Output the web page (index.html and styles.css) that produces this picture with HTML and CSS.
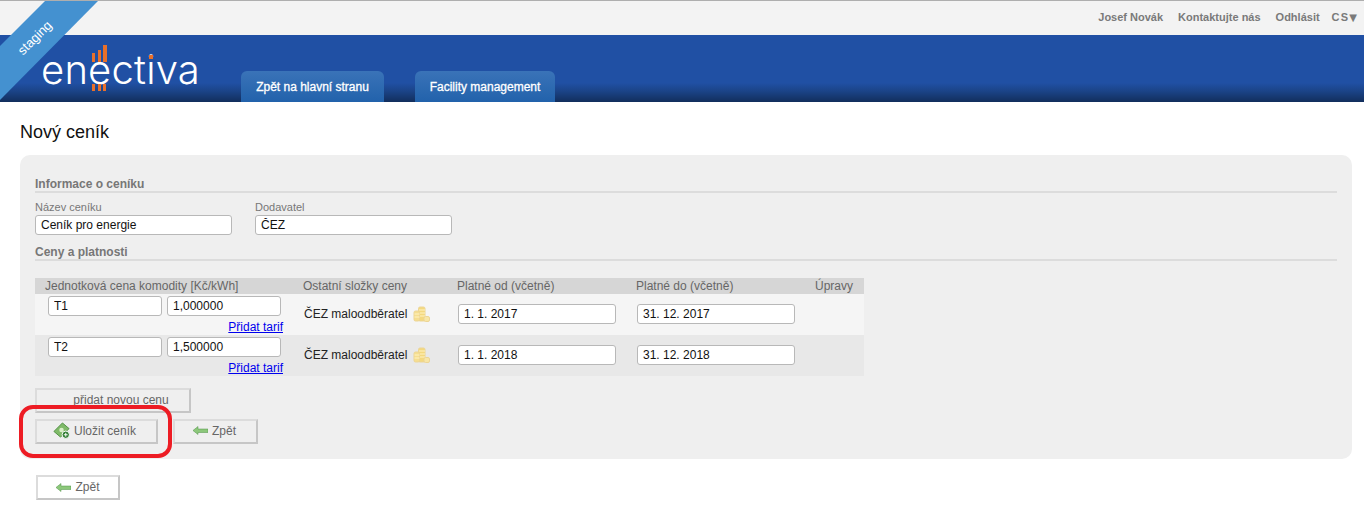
FILE: index.html
```html
<!DOCTYPE html>
<html lang="cs">
<head>
<meta charset="utf-8">
<title>Nový ceník</title>
<link rel="stylesheet" href="styles.css">
</head>
<body>
<svg class="ribbon" width="100" height="102" viewBox="0 0 100 102"><polygon points="45,1 98,1 0,100 0,46" fill="#4491d0"/></svg>
<span class="ribbon-text">staging</span>
<header>
  <nav class="topbar">
    <a>Josef Novák</a><a>Kontaktujte nás</a><a>Odhlásit</a><a class="lang">CS<span class="caret">▼</span></a>
  </nav>
  <div class="mainbar">
    <div class="logo">
      <span class="logo-text">enectiva</span>
      <svg class="logo-marks" width="70" height="48" viewBox="0 0 70 48"><g fill="#e8702a"><rect x="3" y="8" width="3" height="9"/><rect x="9" y="5" width="3" height="12"/><rect x="14" y="0" width="4" height="17"/><rect x="3" y="39" width="3" height="7"/><rect x="9" y="39" width="3" height="7"/><rect x="14" y="39" width="3" height="7"/><rect x="60" y="10" width="4" height="4"/></g></svg>
    </div>
    <a class="tab tab-home">Zpět na hlavní stranu</a>
    <a class="tab">Facility management</a>
  </div>
</header>
<main>
  <h1>Nový ceník</h1>
  <section class="panel">
    <h2>Informace o ceníku</h2>
    <div class="fields">
      <label class="field">Název ceníku<input class="input wide" value="Ceník pro energie"></label>
      <label class="field">Dodavatel<input class="input wide" value="ČEZ"></label>
    </div>
    <h2 class="second">Ceny a platnosti</h2>
    <table class="prices">
      <thead>
        <tr><th class="c1">Jednotková cena komodity [Kč/kWh]</th><th class="c2">Ostatní složky ceny</th><th class="c3">Platné od (včetně)</th><th class="c4">Platné do (včetně)</th><th class="c5">Úpravy</th></tr>
      </thead>
      <tbody>
        <tr class="light">
          <td class="tariff"><div class="pair"><input class="input small" value="T1"><input class="input small" value="1,000000"></div><a class="add" href="#">Přidat tarif</a></td>
          <td class="mid"><div class="other">ČEZ maloodběratel<svg class="coins" width="17" height="17" viewBox="0 0 17 17"><use href="#coin"/></svg></div></td>
          <td class="mid"><input class="input date" value="1. 1. 2017"></td>
          <td class="mid"><input class="input date date-to" value="31. 12. 2017"></td>
          <td></td>
        </tr>
        <tr class="dark">
          <td class="tariff"><div class="pair"><input class="input small" value="T2"><input class="input small" value="1,500000"></div><a class="add" href="#">Přidat tarif</a></td>
          <td class="mid"><div class="other">ČEZ maloodběratel<svg class="coins" width="17" height="17" viewBox="0 0 17 17"><use href="#coin"/></svg></div></td>
          <td class="mid"><input class="input date" value="1. 1. 2018"></td>
          <td class="mid"><input class="input date date-to" value="31. 12. 2018"></td>
          <td></td>
        </tr>
      </tbody>
    </table>
    <button class="btn btn-new">přidat novou cenu</button>
    <div class="actions">
      <button class="btn btn-save"><svg width="17" height="17" viewBox="0 0 18 18"><polygon points="1,10 10,1 17,7 8,16" fill="#7fba68" stroke="#4f8f42"/><circle cx="9" cy="8.500" r="2.400" fill="#d8efc8"/><circle cx="13.500" cy="13.500" r="3.900" fill="#2f7d32" stroke="#fff"/><path d="M13.500 11.500v4M11.500 13.500h4" stroke="#fff"/></svg>Uložit ceník</button>
      <button class="btn btn-back"><svg class="arrow" width="15" height="9" viewBox="0 0 15 9"><use href="#arrow"/></svg>Zpět</button>
    </div>
    <div class="highlight"></div>
  </section>
  <button class="btn btn-back btn-bottom"><svg class="arrow" width="15" height="9" viewBox="0 0 15 9"><use href="#arrow"/></svg>Zpět</button>
</main>
<svg class="defs" width="0" height="0">
  <defs>
    <g id="coin">
      <rect x="5.500" y="1" width="6.500" height="14" rx="1.500" fill="#f4d97f" stroke="#ecd595"/>
      <path d="M6 4h6M6 7h6M6 10h6" stroke="#fff2c2"/>
      <rect x="1" y="5" width="5.500" height="10" rx="1.500" fill="#f6de90" stroke="#ecd595"/>
      <path d="M1.500 8h5M1.500 11h5" stroke="#fff2c2"/>
      <rect x="11" y="10.500" width="5.500" height="5" rx="1.500" fill="#f8e6a6" stroke="#ecd595"/>
    </g>
    <g id="arrow">
      <polygon points="0,4.500 5,0.500 5,3 15,3 15,6.500 5,6.500 5,8.500" fill="#8cc77a" stroke="#4f9146" stroke-width="0.500"/>
    </g>
  </defs>
</svg>
</body>
</html>
```
FILE: styles.css
```css
* { box-sizing: border-box; }
html, body { margin: 0; padding: 0; }
body {
  position: relative;
  background: #fff;
  font-family: "Liberation Sans", Arial, sans-serif;
  font-size: 12px;
  color: #222;
}
.ribbon { position: absolute; left: 0; top: 0; z-index: 2; }
.ribbon-text {
  position: absolute; left: 12px; top: 31px; z-index: 3;
  width: 46px; text-align: center;
  color: #fff; font-size: 13px; line-height: 14px;
  transform: rotate(-45deg);
}
.topbar {
  height: 35px;
  background: #f3f3f3;
  border-top: 1px solid #aeaeae;
  display: flex;
  justify-content: flex-end;
  align-items: center;
  gap: 15px;
  padding: 0 7px 2px 0;
  color: #7a7a7a;
  font-size: 11px;
  font-weight: bold;
}
.topbar .lang { margin-left: -3px; letter-spacing: 1.2px; font-weight: bold; }
.caret { font-family: "DejaVu Sans", sans-serif; font-size: 10px; letter-spacing: 0; }
.mainbar {
  height: 67px;
  display: flex;
  align-items: flex-end;
  padding-left: 43px;
  background: linear-gradient(to bottom, #2050a4 0, #2050a4 48px, #1b4488 56px, #122e5c 67px);
}
.logo { position: relative; width: 198px; height: 67px; flex: none; }
.logo-text {
  position: absolute; left: -2px; top: 11px;
  font-family: "Inter", sans-serif;
  font-weight: 300;
  font-size: 40px;
  line-height: 48px;
  letter-spacing: 0.2px;
  color: #fff;
}
.logo-marks { position: absolute; left: 46px; top: 10px; }
.tab {
  height: 31px;
  width: 143px;
  margin-right: 31px;
  border-radius: 6px 6px 0 0;
  background: linear-gradient(to bottom, #3a73b8, #2262ab);
  color: #fff;
  font-weight: normal;
  -webkit-text-stroke: 0.3px #fff;
  font-size: 12px;
  line-height: 32px;
  text-align: center;
}
.tab + .tab { width: 140px; }
main { padding: 0 12px 0 20px; }
h1 {
  margin: 0;
  padding-top: 20px;
  height: 53px;
  font-size: 18px;
  line-height: 21px;
  font-weight: normal;
  color: #111;
}
.panel {
  position: relative;
  height: 304px;
  background: #efefef;
  border-radius: 10px;
  padding: 22px 15px 0;
}
h2 {
  margin: 0;
  height: 16px;
  font-size: 12px;
  line-height: 14px;
  font-weight: bold;
  color: #777;
  border-bottom: 2px solid #dcdcdc;
}
h2.second { margin-top: 10px; margin-bottom: 17px; }
.fields { display: flex; gap: 23px; padding-top: 8px; }
.field { display: flex; flex-direction: column; color: #777; font-size: 11px; line-height: 13px; }
.field .input { margin-top: 1px; }
.input {
  display: block;
  height: 20px;
  padding: 0 5px;
  background: #fff;
  border: 1px solid #b8b8b8;
  border-radius: 3px;
  font-family: "Liberation Sans", Arial, sans-serif;
  font-size: 12px;
  color: #111;
}
.wide { width: 197px; }
.small { width: 114px; }
.date { width: 158px; margin-left: 8px; }
.date-to { margin-left: 9px; }
.prices { border-collapse: collapse; table-layout: fixed; width: 829px; }
.prices th {
  height: 16px;
  padding: 0;
  background: #d6d6d6;
  color: #666;
  font-size: 12px;
  line-height: 14px;
  font-weight: normal;
  text-align: left;
}
.prices td { padding: 0; height: 41px; vertical-align: middle; }
.prices td.mid { padding-bottom: 2px; }
.c1 { width: 260px; padding-left: 10px !important; }
.c2 { width: 155px; padding-left: 8px !important; }
.c3 { width: 178px; padding-left: 7px !important; }
.c4 { width: 179px; padding-left: 8px !important; }
.c5 { width: 57px; padding-left: 8px !important; }
.light td { background: #f5f5f5; }
.dark td { background: #e8e8e8; }
.prices td.tariff { vertical-align: top; padding-top: 2px; }
.pair { display: flex; gap: 5px; padding-left: 13px; }
.add { display: block; margin-right: 12px; text-align: right; color: #00e; text-decoration: underline; line-height: 14px; font-size: 12px; margin-top: 4px; }
.other { display: flex; align-items: center; gap: 6px; padding-left: 9px; font-size: 12px; color: #222; }
.coins { position: relative; top: 1px; }
.btn {
  display: flex;
  align-items: center;
  justify-content: center;
  height: 25px;
  padding: 0 0 2px;
  background: #efefef;
  border: 2px solid #dcdcdc;
  border-bottom-color: #c6c6c6;
  border-right-color: #c6c6c6;
  color: #666;
  font-family: "Liberation Sans", Arial, sans-serif;
  font-size: 12px;
}
.btn-new { width: 156px; margin-top: 12px; padding-left: 16px; }
.actions { display: flex; gap: 15px; margin-top: 6px; }
.btn-save { width: 123px; gap: 4px; padding-right: 4px; }
.btn-back { width: 85px; gap: 4px; padding-right: 2px; }
.btn-bottom { width: 84px; margin: 16px 0 0 16px; background: #fff; padding: 0 0 1px; }
.highlight {
  position: absolute;
  left: -1px; top: 250px;
  width: 153px; height: 53px;
  border: 4px solid #ed1c24;
  border-radius: 14px;
}
.defs { position: absolute; }
```
